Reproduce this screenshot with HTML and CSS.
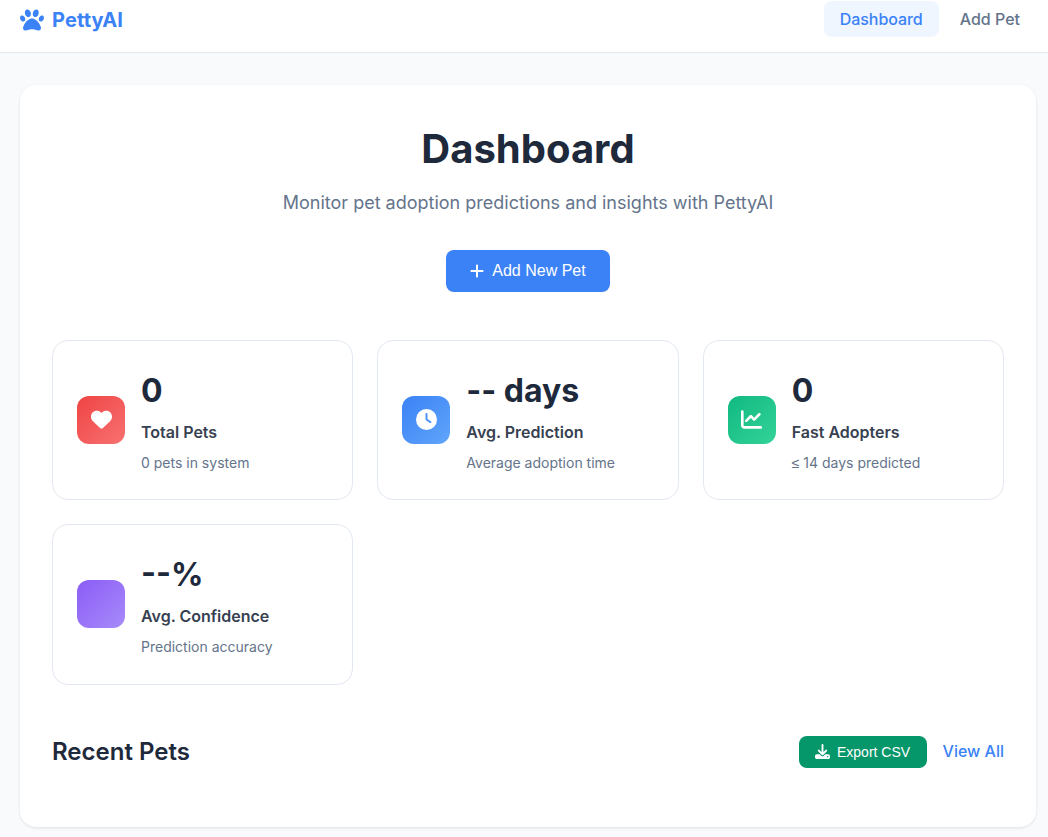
FILE: index.html
```
<!DOCTYPE html>
<html lang="en">
<head>
<meta charset="utf-8">
<title>PettyAI</title>
<link rel="stylesheet" href="styles.css">
</head>
<body>
<header class="header">
  <div class="logo">
    <svg class="logo-icon" viewBox="0 0 512 512"><path d="M226.500 92.900c14.300 42.900-.3 86.200-32.600 96.800s-70.100-15.600-84.400-58.500s.3-86.200 32.600-96.800s70.100 15.600 84.400 58.500zM100.400 198.600c18.900 32.400 14.300 70.100-10.200 84.100s-59.700-.9-78.500-33.300S-2.700 179.300 21.800 165.300s59.700 .9 78.500 33.300zM69.200 401.200C121.600 259.900 214.700 224 256 224s134.400 35.900 186.800 177.200c3.600 9.700 5.200 20.100 5.200 30.500v1.600c0 25.800-20.900 46.700-46.700 46.700c-11.500 0-22.900-1.400-34-4.200l-88-22c-15.300-3.800-31.300-3.800-46.600 0l-88 22c-11.100 2.800-22.500 4.200-34 4.200C84.900 480 64 459.100 64 433.300v-1.600c0-10.400 1.600-20.800 5.200-30.500zM421.800 282.700c-24.500-14-29.100-51.700-10.200-84.100s54-47.300 78.500-33.300s29.100 51.700 10.200 84.100s-54 47.300-78.500 33.300zM310.100 189.700c-32.300-10.600-46.900-53.900-32.600-96.800s52.100-69.100 84.400-58.500s46.900 53.900 32.600 96.800s-52.100 69.100-84.400 58.500z"/></svg>
    <span>PettyAI</span>
  </div>
  <nav class="nav">
    <a class="nav-link active">Dashboard</a>
    <a class="nav-link">Add Pet</a>
  </nav>
</header>
<main class="panel">
  <section class="intro">
    <h1 class="title">Dashboard</h1>
    <p class="subtitle">Monitor pet adoption predictions and insights with PettyAI</p>
    <button class="btn-primary">
      <svg class="plus" viewBox="0 0 448 512"><path d="M256 80c0-17.700-14.300-32-32-32s-32 14.300-32 32V224H48c-17.700 0-32 14.300-32 32s14.300 32 32 32H192V432c0 17.700 14.300 32 32 32s32-14.300 32-32V288H400c17.700 0 32-14.300 32-32s-14.300-32-32-32H256V80z"/></svg>
      <span>Add New Pet</span>
    </button>
  </section>
  <section class="stats">
    <article class="stat">
      <div class="stat-icon red"><svg viewBox="0 0 512 512"><path d="M47.600 300.400L228.300 469.100c7.500 7 17.400 10.900 27.700 10.900s20.200-3.900 27.700-10.900L464.400 300.400c30.400-28.300 47.600-68 47.600-109.500v-5.800c0-69.900-50.500-129.500-119.400-141C347 36.500 300.600 51.400 268 84L256 96 244 84c-32.600-32.600-79-47.500-124.600-39.900C50.500 55.600 0 115.200 0 185.100v5.800c0 41.500 17.200 81.200 47.600 109.500z"/></svg></div>
      <div class="stat-body">
        <div class="stat-value">0</div>
        <div class="stat-label">Total Pets</div>
        <div class="stat-note">0 pets in system</div>
      </div>
    </article>
    <article class="stat">
      <div class="stat-icon blue"><svg viewBox="0 0 512 512"><path d="M256 0a256 256 0 1 1 0 512A256 256 0 1 1 256 0zM232 120V256c0 8 4 15.500 10.700 20l96 64c11 7.400 25.900 4.400 33.300-6.700s4.400-25.900-6.700-33.300L280 243.200V120c0-13.300-10.700-24-24-24s-24 10.700-24 24z"/></svg></div>
      <div class="stat-body">
        <div class="stat-value">-- days</div>
        <div class="stat-label">Avg. Prediction</div>
        <div class="stat-note">Average adoption time</div>
      </div>
    </article>
    <article class="stat">
      <div class="stat-icon green"><svg viewBox="0 0 512 512"><path d="M64 64c0-17.700-14.300-32-32-32S0 46.300 0 64V400c0 44.200 35.800 80 80 80H480c17.700 0 32-14.300 32-32s-14.300-32-32-32H80c-8.800 0-16-7.200-16-16V64zm406.600 86.600c12.500-12.500 12.500-32.800 0-45.300s-32.800-12.500-45.300 0L320 210.700l-57.400-57.400c-12.500-12.500-32.800-12.500-45.300 0l-112 112c-12.500 12.500-12.500 32.800 0 45.300s32.800 12.500 45.300 0L240 221.300l57.400 57.400c12.500 12.500 32.800 12.500 45.300 0l128-128z"/></svg></div>
      <div class="stat-body">
        <div class="stat-value">0</div>
        <div class="stat-label">Fast Adopters</div>
        <div class="stat-note"><span class="symbol">≤</span> 14 days predicted</div>
      </div>
    </article>
    <article class="stat">
      <div class="stat-icon purple"></div>
      <div class="stat-body">
        <div class="stat-value">--%</div>
        <div class="stat-label">Avg. Confidence</div>
        <div class="stat-note">Prediction accuracy</div>
      </div>
    </article>
  </section>
  <section class="recent">
    <h2 class="recent-title">Recent Pets</h2>
    <div class="recent-actions">
      <button class="btn-export">
        <svg class="download" viewBox="0 0 512 512"><path d="M288 32c0-17.700-14.300-32-32-32s-32 14.300-32 32V274.700l-73.400-73.400c-12.500-12.500-32.800-12.500-45.300 0s-12.500 32.800 0 45.300l128 128c12.500 12.500 32.800 12.500 45.300 0l128-128c12.500-12.500 12.500-32.800 0-45.300s-32.800-12.500-45.300 0L288 274.700V32zM64 352c-35.300 0-64 28.700-64 64v32c0 35.300 28.700 64 64 64H448c35.300 0 64-28.700 64-64V416c0-35.300-28.700-64-64-64H346.500l-45.300 45.300c-25 25-65.500 25-90.500 0L165.500 352H64zm368 56a24 24 0 1 1 0 48 24 24 0 1 1 0-48z"/></svg>
        <span>Export CSV</span>
      </button>
      <a class="view-all">View All</a>
    </div>
  </section>
</main>
</body>
</html>
```
FILE: styles.css
```
* { box-sizing: border-box; margin: 0; padding: 0; }
html { overflow: hidden; }
body { min-height: 100vh; font-family: Inter, sans-serif; background: #f8fafc; color: #1e293b; line-height: 1.6; }
svg { fill: currentColor; display: block; flex: none; }

.header { display: flex; justify-content: space-between; align-items: flex-start; height: 53px; padding: 0 12px 0 20px; background: #fff; border-bottom: 1px solid #e2e8f0; }
.logo { display: flex; align-items: center; gap: 8px; height: 40px; color: #3b82f6; font-size: 20px; font-weight: 700; letter-spacing: .1px; }
.logo-icon { width: 24px; height: 24px; }
.nav { display: flex; gap: 5px; padding-top: 1px; }
.nav-link { height: 36px; padding: 0 16px; line-height: 36px; border-radius: 8px; font-size: 16px; font-weight: 500; color: #64748b; }
.nav-link.active { background: #eff6ff; color: #3b82f6; width: 115px; letter-spacing: -.05px; }

.panel { margin: 32px 12px 0 20px; height: 742px; padding: 32px; background: #fff; border-radius: 16px; box-shadow: 0 1px 3px rgba(0, 0, 0, .1); }
.intro { display: flex; flex-direction: column; align-items: center; }
.title { font-size: 40px; font-weight: 700; line-height: 64px; }
.subtitle { margin-top: 8px; font-size: 18px; line-height: 28px; color: #64748b; }
.btn-primary { display: flex; align-items: center; justify-content: center; gap: 8px; width: 164px; height: 42px; margin-top: 33px; border: 0; border-radius: 8px; background: #3b82f6; color: #fff; font: 16px "Liberation Sans", Arial, sans-serif; }
.plus { width: 14px; height: 16px; }

.stats { display: grid; grid-template-columns: repeat(3, 1fr); gap: 24px; margin-top: 48px; }
.stat { display: flex; align-items: center; gap: 16px; height: 160.3px; padding: 24px; border: 1px solid #e2e8f0; border-radius: 16px; background: #fff; }
.stat-icon { display: flex; align-items: center; justify-content: center; flex: none; width: 48px; height: 48px; padding-bottom: 1px; border-radius: 12px; color: #fff; }
.stat-icon svg { width: 21px; height: 21px; }
.red { background: linear-gradient(135deg, #ef4444, #f87171); }
.blue { background: linear-gradient(135deg, #3b82f6, #60a5fa); }
.green { background: linear-gradient(135deg, #10b981, #34d399); }
.purple { background: linear-gradient(135deg, #8b5cf6, #a78bfa); }
.stat-value { font-size: 32px; font-weight: 700; line-height: 51px; }
.stat-label { margin-top: 3px; font-size: 16px; font-weight: 600; line-height: 26px; color: #374151; }
.stat-note { margin-top: 5px; font-size: 14px; line-height: 26px; color: #64748b; }
.symbol { font-family: "Liberation Sans", Arial, sans-serif; line-height: 1; }

.recent { display: flex; justify-content: space-between; align-items: center; margin-top: 48.4px; }
.recent-title { font-size: 24px; font-weight: 600; line-height: 38px; }
.recent-actions { display: flex; align-items: center; gap: 16px; }
.btn-export { display: flex; align-items: center; justify-content: center; gap: 7px; width: 128px; height: 32px; border: 0; border-radius: 8px; background: #059669; color: #fff; font: 14px "Liberation Sans", Arial, sans-serif; }
.download { width: 15px; height: 15px; }
.view-all { font-size: 16px; font-weight: 500; color: #3b82f6; }
```
